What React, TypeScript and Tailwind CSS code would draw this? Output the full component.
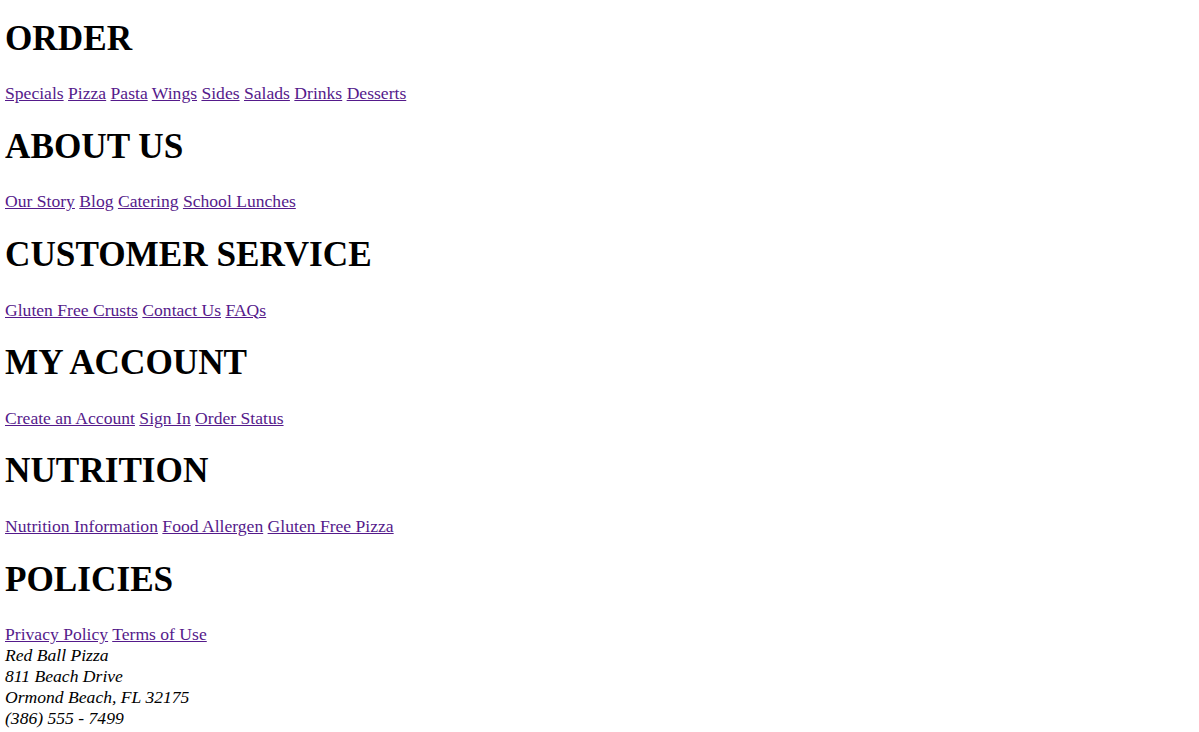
const sections: { title: string; links: string[] }[] = [
  { title: "ORDER", links: ["Specials", "Pizza", "Pasta", "Wings", "Sides", "Salads", "Drinks", "Desserts"] },
  { title: "ABOUT US", links: ["Our Story", "Blog", "Catering", "School Lunches"] },
  { title: "CUSTOMER SERVICE", links: ["Gluten Free Crusts", "Contact Us", "FAQs"] },
  { title: "MY ACCOUNT", links: ["Create an Account", "Sign In", "Order Status"] },
  { title: "NUTRITION", links: ["Nutrition Information", "Food Allergen", "Gluten Free Pizza"] },
  { title: "POLICIES", links: ["Privacy Policy", "Terms of Use"] },
];

export default function App() {
  return (
    <footer className="px-[5px] pt-px text-[17.6px] leading-[normal] text-black bg-white" style={{ fontFamily: '"Liberation Serif", "Times New Roman", serif' }}>
      {sections.map((s, idx) => (
        <div key={s.title}>
          <h1 className={(idx === 0 ? "mt-[17.6px] " : "mt-[22.6px] ") + "mb-[24.6px] text-[35.2px] font-bold leading-[normal]"}>{s.title}</h1>
          <div>
            {s.links.map((l, i) => (
              <span key={l}>
                <a href="#" className="underline text-[#551a8b]">{l}</a>
                {i < s.links.length - 1 ? " " : ""}
              </span>
            ))}
          </div>
        </div>
      ))}
      <address className="italic leading-[21px]">
        Red Ball Pizza<br />
        811 Beach Drive<br />
        Ormond Beach, FL 32175<br />
        (386) 555 - 7499
      </address>
    </footer>
  );
}
